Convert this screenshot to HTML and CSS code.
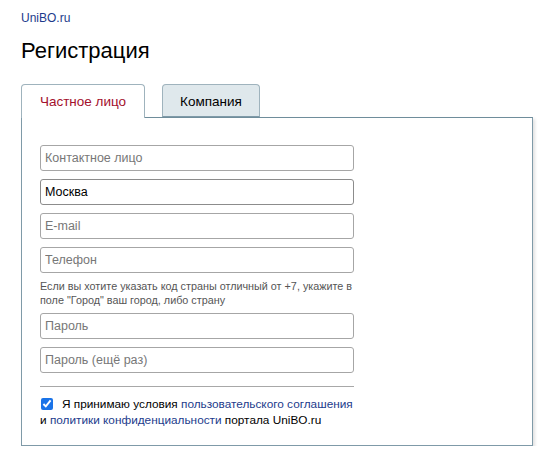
FILE: index.html
```html
<!DOCTYPE html>
<html lang="ru">
<head>
    <meta charset="UTF-8">
    <meta name="viewport" content="width=device-width, initial-scale=1.0">
    <title>Регистрация — UniBO.ru</title>
    <link rel="stylesheet" href="styles.css">
</head>
<body>
    <div class="page">
        <a class="logo" href="#">UniBO.ru</a>
        <h1>Регистрация</h1>

        <div class="tabs">
            <div class="tab active">Частное лицо</div>
            <div class="tab">Компания</div>
        </div>

        <div class="panel">
            <form class="reg-form">
                <input type="text" placeholder="Контактное лицо">
                <input type="text" class="focused" value="Москва" autofocus>
                <input type="text" placeholder="E-mail">
                <input type="text" placeholder="Телефон">
                <p class="hint">Если вы хотите указать код страны отличный от +7, укажите в поле "Город" ваш город, либо страну</p>
                <input type="password" placeholder="Пароль">
                <input type="password" placeholder="Пароль (ещё раз)">
                <hr class="divider">
                <label class="agree">
                    <input type="checkbox" checked>
                    <span>Я принимаю условия <a href="#">пользовательского соглашения</a></span>
                </label>
                <div class="agree-tail">и <a href="#">политики конфиденциальности</a> портала UniBO.ru</div>
            </form>
        </div>
    </div>
</body>
</html>
```

FILE: styles.css
```css
* {
    margin: 0;
    padding: 0;
    box-sizing: border-box;
}

body {
    font-family: 'Liberation Sans', Arial, sans-serif;
    background: #fff;
    color: #000;
}

.page {
    padding: 8px 15px 0 21px;
}

.logo {
    display: inline-block;
    font-size: 12px;
    line-height: 16px;
    color: #1c3b8c;
    text-decoration: none;
}

h1 {
    font-size: 22px;
    font-weight: normal;
    line-height: 26px;
    margin-top: 12px;
    margin-bottom: 20px;
}

/* вкладки */
.tabs {
    display: flex;
    gap: 17px;
    position: relative;
    z-index: 1;
}

.tab {
    height: 34px;
    border: 1px solid #9fb3bd;
    border-bottom: none;
    border-radius: 4px 4px 0 0;
    font-size: 13.5px;
    line-height: 33px;
    text-align: center;
    background: #dfe8ec;
    color: #000;
    margin-bottom: -1px;
}

.tab:first-child {
    width: 124px;
}

.tab:last-child {
    width: 98px;
    height: 33px;
    border-bottom: 1px solid #7f9aa8;
}

.tab.active {
    background: #fff;
    color: #a3102d;
}

.panel {
    border: 1px solid #7f9aa8;
    border-top-color: #6f8d9b;
    box-shadow: 2px 2px 3px rgba(0, 0, 0, 0.12);
    padding: 27px 18px 17px;
    height: 329px;
}

.reg-form {
    width: 314px;
    display: flex;
    flex-direction: column;
}

.reg-form input[type="text"],
.reg-form input[type="password"] {
    height: 26px;
    border: 1px solid #a6a6a6;
    border-radius: 3px;
    padding: 0 4px;
    font-family: inherit;
    font-size: 12.5px;
    color: #000;
    margin-bottom: 8px;
    outline: none;
}

.reg-form input::placeholder {
    color: #777;
}

.reg-form input.focused {
    border-color: #8c8c8c;
    caret-color: #000;
}

.hint {
    font-size: 10.8px;
    line-height: 14px;
    color: #555;
    margin: -2px 0 6px;
}

.divider {
    border: none;
    border-top: 1px solid #a8a8a8;
    margin: 5px 0 9px;
}

.agree {
    display: flex;
    align-items: center;
    font-size: 11.8px;
    line-height: 16px;
    white-space: nowrap;
}

.agree input {
    width: 12px;
    height: 12px;
    margin: 0 9px 0 1px;
    accent-color: #1a73e8;
}

.agree a,
.agree-tail a {
    color: #1c3b8c;
    text-decoration: none;
}

.agree-tail {
    font-size: 11.8px;
    line-height: 16px;
}
```
